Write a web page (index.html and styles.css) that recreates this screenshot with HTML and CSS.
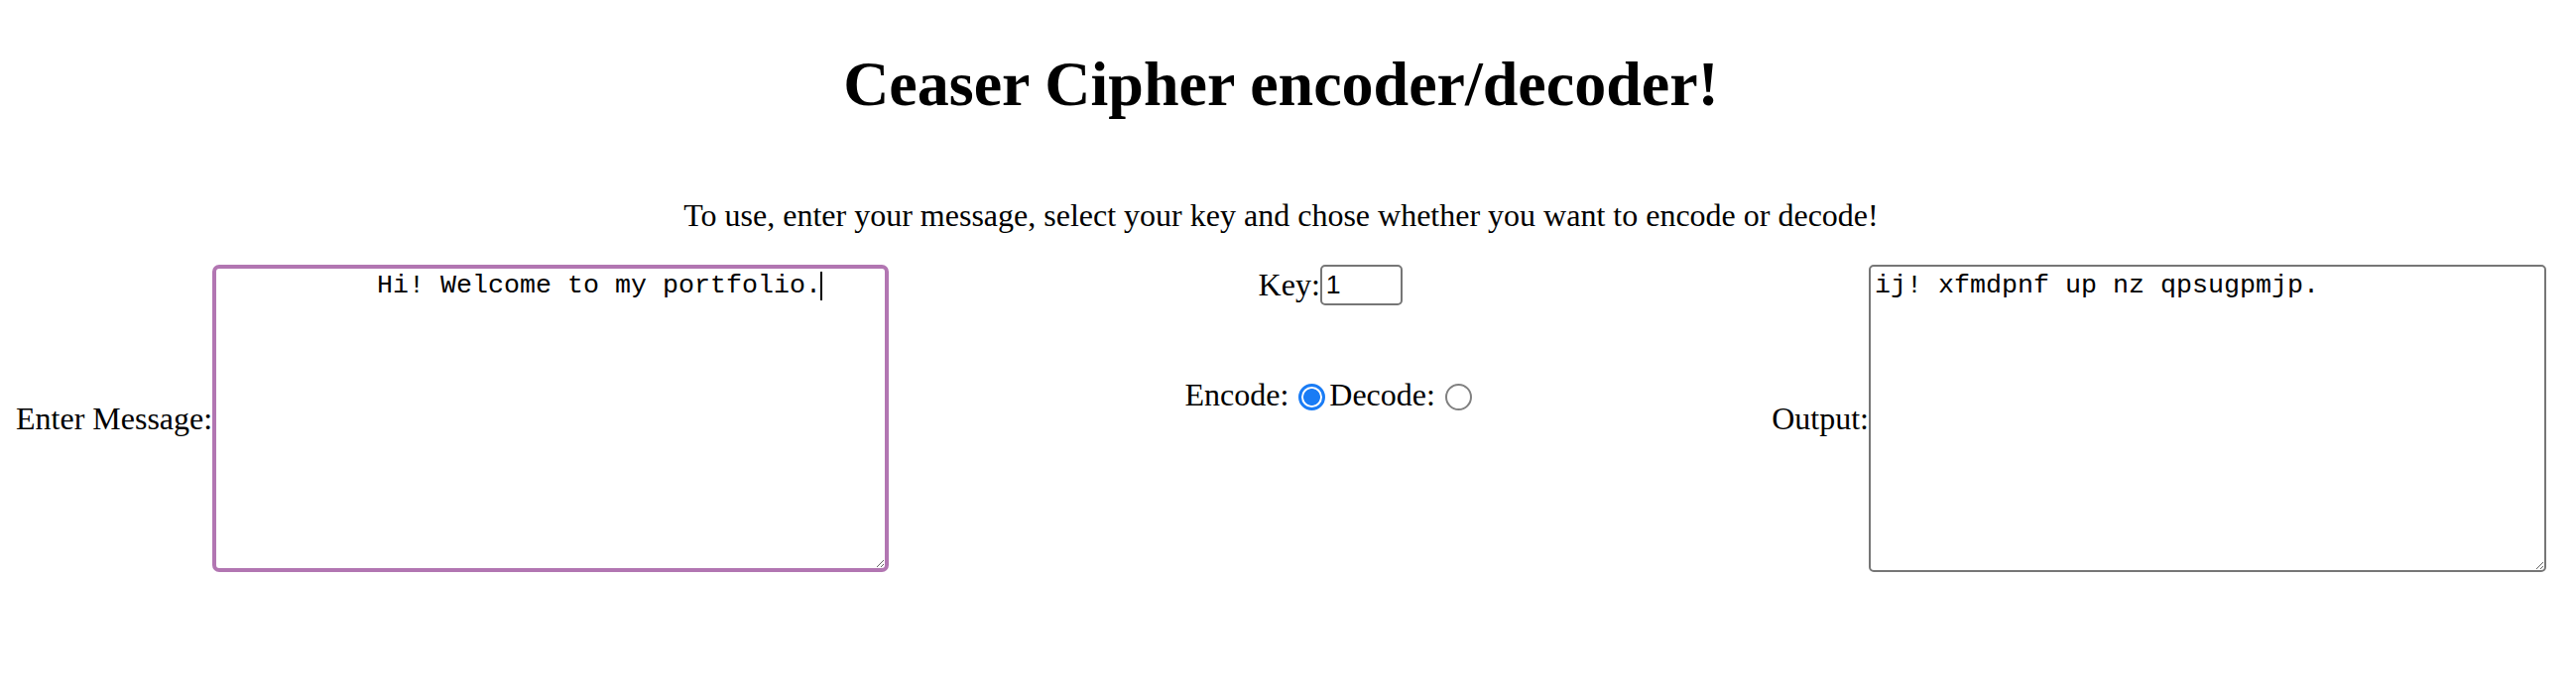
FILE: index.html
```html
<!DOCTYPE html>
<html lang="en">
<head>
<meta charset="utf-8">
<title>Ceaser Cipher</title>
<link rel="stylesheet" href="styles.css">
</head>
<body>
<h1 class="title">Ceaser Cipher encoder/decoder!</h1>
<p class="intro">To use, enter your message, select your key and chose whether you want to encode or decode!</p>
<div class="row">
  <div class="group">
    <label class="label" for="msg">Enter Message:</label>
    <span class="field">
      <textarea id="msg" class="box box-focus">          Hi! Welcome to my portfolio.</textarea>
      <span class="caret"></span>
    </span>
  </div>
  <div class="middle">
    <div class="key-row">
      <label class="label" for="key">Key:</label>
      <input id="key" class="key-input" type="text" value="1">
    </div>
    <div class="mode-row">
      <span class="label">Encode:</span>
      <span class="radio radio-on"></span>
      <span class="label">Decode:</span>
      <span class="radio radio-off"></span>
    </div>
  </div>
  <div class="group">
    <label class="label" for="out">Output:</label>
    <textarea id="out" class="box">ij! xfmdpnf up nz qpsugpmjp.</textarea>
  </div>
</div>
</body>
</html>
```
FILE: styles.css
```css
html, body {
  background: #ffffff;
}
body {
  margin: 16px 30px 16px 16px;
  font-family: "Liberation Serif", "Times New Roman", serif;
  font-size: 32px;
  color: #000;
}
.title {
  font-size: 64px;
  font-weight: bold;
  text-align: center;
  margin: 32px 0 0;
  line-height: 74px;
}
.intro {
  text-align: center;
  margin: 77px 0 0;
  line-height: 37px;
}
.row {
  display: flex;
  justify-content: space-between;
  align-items: flex-start;
  margin-top: 31px;
}
.group {
  display: flex;
  align-items: center;
}
.label {
  white-space: nowrap;
}
.field {
  position: relative;
  display: flex;
}
.caret {
  position: absolute;
  left: 613px;
  top: 7px;
  width: 2px;
  height: 29px;
  background: #000;
}
.box {
  box-sizing: border-box;
  width: 683px;
  height: 310px;
  margin: 0;
  padding: 4px;
  border: 2px solid #767676;
  border-radius: 5px;
  font-family: "Liberation Mono", "Courier New", monospace;
  font-size: 26.67px;
  line-height: 30px;
  color: #000;
  background: #fff;
  resize: both;
  white-space: pre;
  overflow: hidden;
}
.box-focus {
  width: 682px;
  border: 4px solid #b276b2;
  border-radius: 7px;
  padding: 2px;
  outline: none;
}
.middle {
  display: flex;
  flex-direction: column;
  align-items: center;
}
.key-row {
  display: flex;
  align-items: center;
  height: 41px;
}
.key-input {
  box-sizing: border-box;
  width: 83px;
  height: 41px;
  margin: 0;
  padding: 0 4px;
  border: 2px solid #767676;
  border-radius: 5px;
  font-family: "Liberation Sans", Arial, sans-serif;
  font-size: 26.67px;
  color: #000;
  background: #fff;
}
.mode-row {
  display: flex;
  align-items: center;
  margin-top: 72px;
}
.radio {
  box-sizing: border-box;
  display: inline-block;
  width: 27px;
  height: 27px;
  border-radius: 50%;
  margin: 4px 4px 0 10px;
}
.radio-on {
  border: 3px solid #1a7cf5;
  background: radial-gradient(circle, #1a7cf5 0 8px, #ffffff 8.8px);
}
.radio-off {
  border: 2px solid #808080;
  background: #fff;
}
```
